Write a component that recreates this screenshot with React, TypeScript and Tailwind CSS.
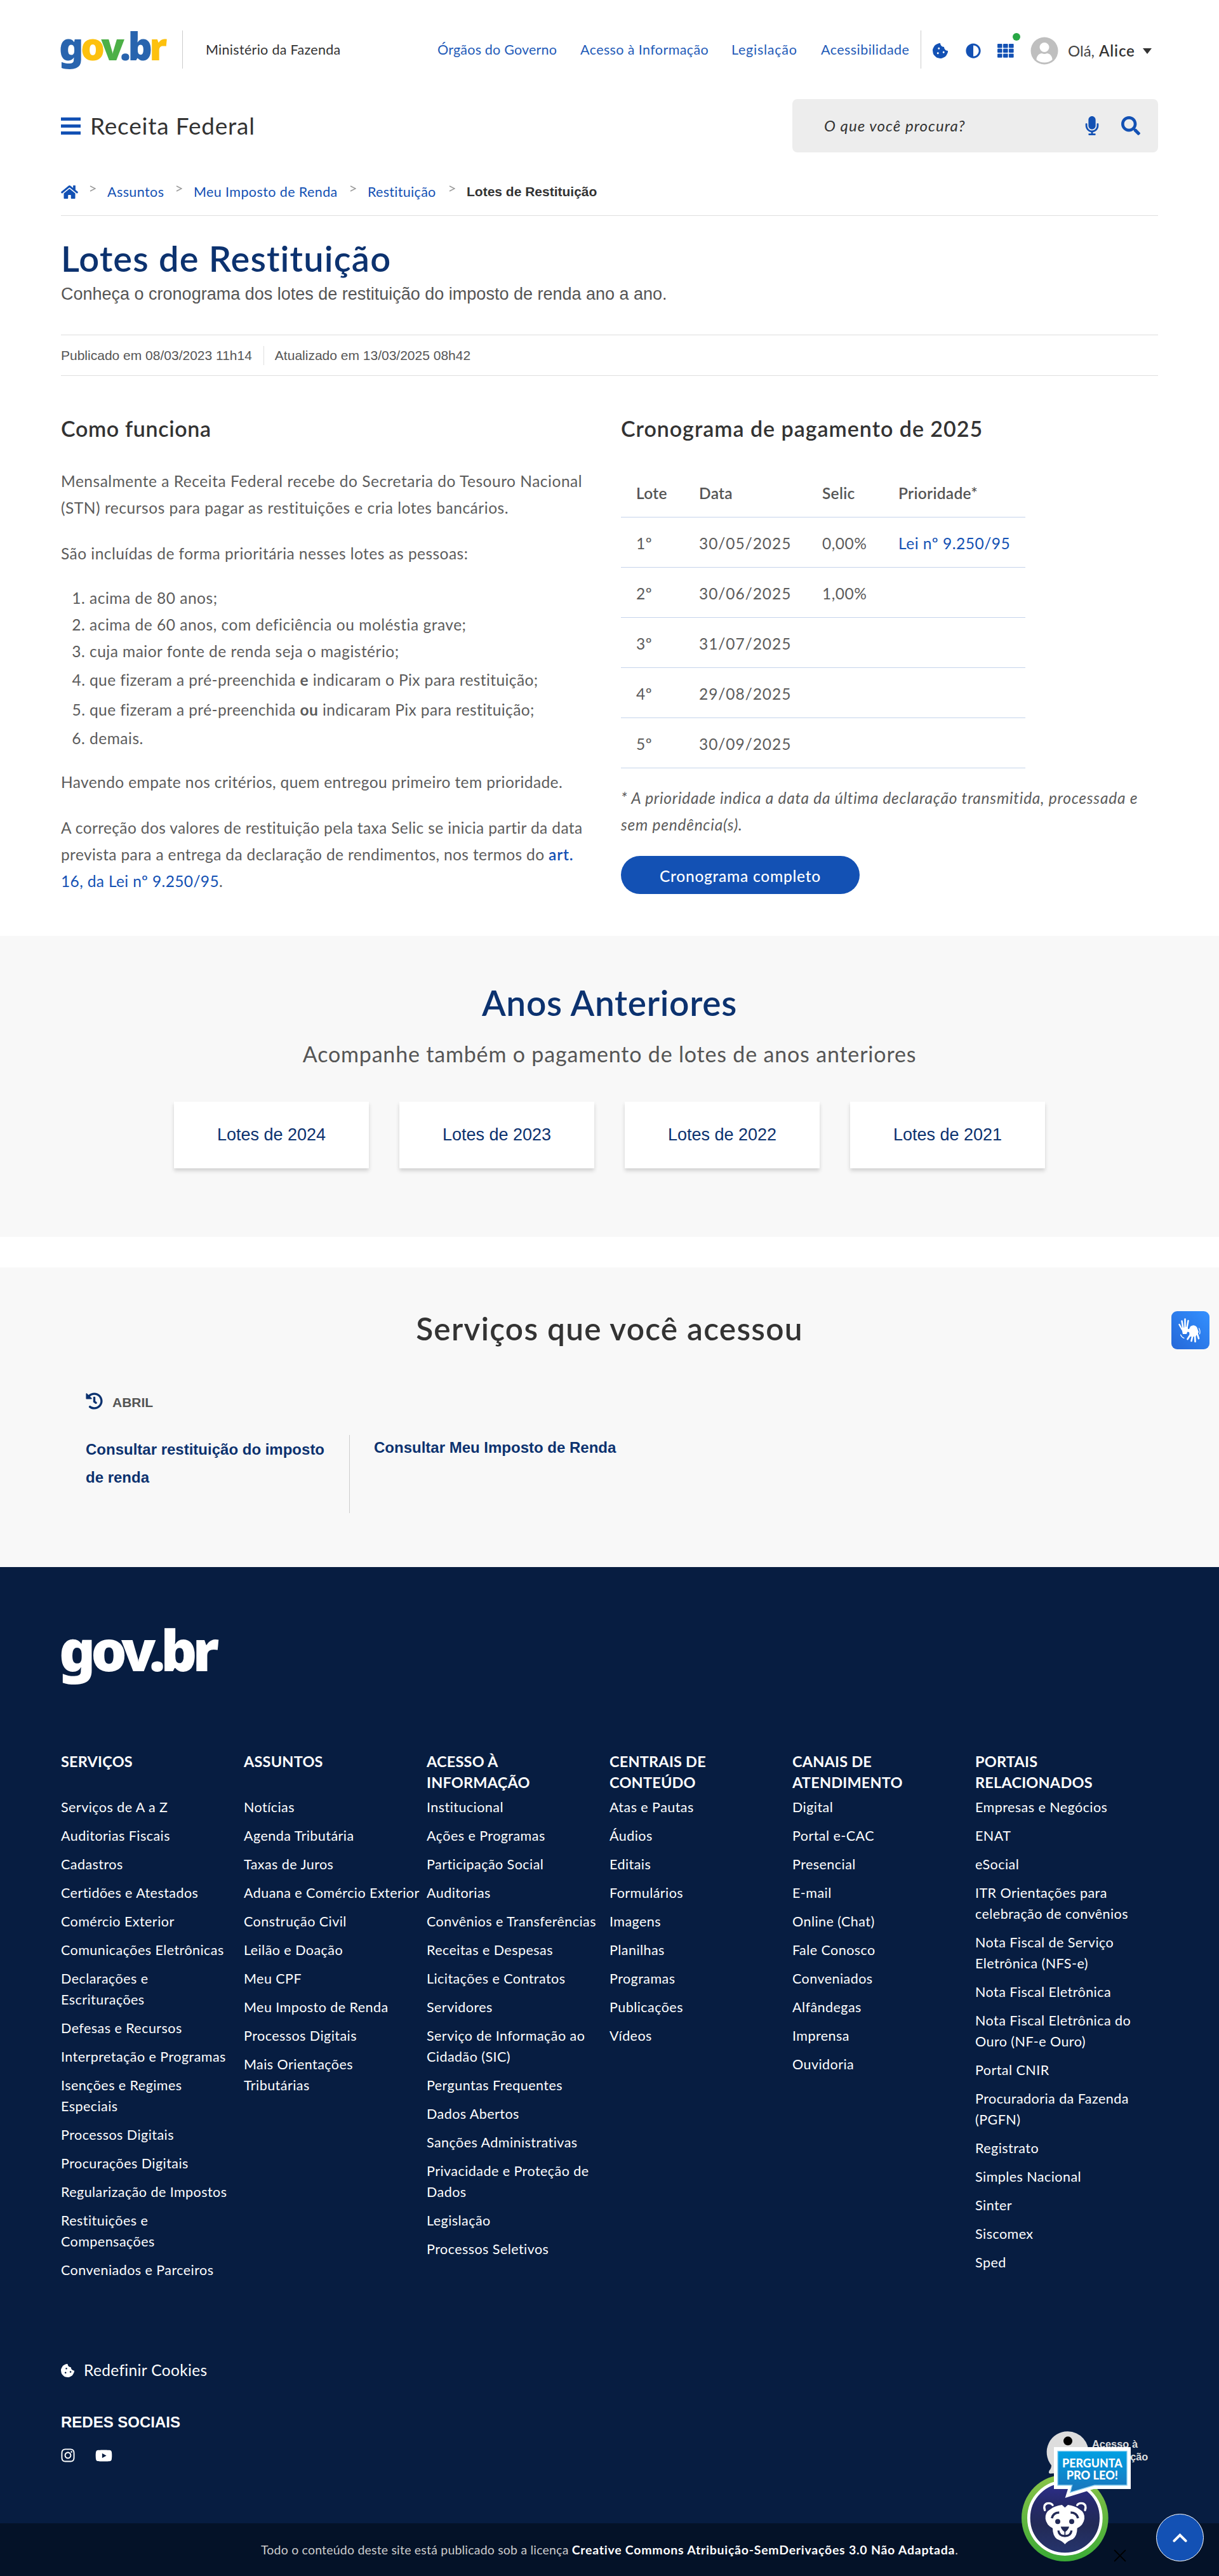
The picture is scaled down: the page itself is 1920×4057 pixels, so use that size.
import type { ReactNode } from 'react';
import {
  FaAdjust, FaCookieBite, FaHistory, FaHome,
  FaInstagram, FaMicrophone, FaSearch, FaYoutube,
} from 'react-icons/fa';

const columns: { title: string[]; items: string[] }[] = [
  {
    title: ['SERVIÇOS'],
    items: ['Serviços de A a Z', 'Auditorias Fiscais', 'Cadastros', 'Certidões e Atestados', 'Comércio Exterior', 'Comunicações Eletrônicas', 'Declarações e\nEscriturações', 'Defesas e Recursos', 'Interpretação e Programas', 'Isenções e Regimes\nEspeciais', 'Processos Digitais', 'Procurações Digitais', 'Regularização de Impostos', 'Restituições e\nCompensações', 'Conveniados e Parceiros'],
  },
  {
    title: ['ASSUNTOS'],
    items: ['Notícias', 'Agenda Tributária', 'Taxas de Juros', 'Aduana e Comércio Exterior', 'Construção Civil', 'Leilão e Doação', 'Meu CPF', 'Meu Imposto de Renda', 'Processos Digitais', 'Mais Orientações\nTributárias'],
  },
  {
    title: ['ACESSO À', 'INFORMAÇÃO'],
    items: ['Institucional', 'Ações e Programas', 'Participação Social', 'Auditorias', 'Convênios e Transferências', 'Receitas e Despesas', 'Licitações e Contratos', 'Servidores', 'Serviço de Informação ao\nCidadão (SIC)', 'Perguntas Frequentes', 'Dados Abertos', 'Sanções Administrativas', 'Privacidade e Proteção de\nDados', 'Legislação', 'Processos Seletivos'],
  },
  {
    title: ['CENTRAIS DE', 'CONTEÚDO'],
    items: ['Atas e Pautas', 'Áudios', 'Editais', 'Formulários', 'Imagens', 'Planilhas', 'Programas', 'Publicações', 'Vídeos'],
  },
  {
    title: ['CANAIS DE', 'ATENDIMENTO'],
    items: ['Digital', 'Portal e-CAC', 'Presencial', 'E-mail', 'Online (Chat)', 'Fale Conosco', 'Conveniados', 'Alfândegas', 'Imprensa', 'Ouvidoria'],
  },
  {
    title: ['PORTAIS', 'RELACIONADOS'],
    items: ['Empresas e Negócios', 'ENAT', 'eSocial', 'ITR Orientações para\ncelebração de convênios', 'Nota Fiscal de Serviço\nEletrônica (NFS-e)', 'Nota Fiscal Eletrônica', 'Nota Fiscal Eletrônica do\nOuro (NF-e Ouro)', 'Portal CNIR', 'Procuradoria da Fazenda\n(PGFN)', 'Registrato', 'Simples Nacional', 'Sinter', 'Siscomex', 'Sped'],
  },
];

const lots: [string, string, string, string][] = [
  ['1º', '30/05/2025', '0,00%', 'Lei nº 9.250/95'],
  ['2º', '30/06/2025', '1,00%', ''],
  ['3º', '31/07/2025', '', ''],
  ['4º', '29/08/2025', '', ''],
  ['5º', '30/09/2025', '', ''],
];

function GridIcon() {
  return (
    <svg width="26" height="22" viewBox="0 0 26 22" fill="#1351b4">
      {[0, 9, 18].map((x) => [0, 7.7, 15.4].map((y) => (
        <rect key={`${x}-${y}`} x={x} y={y} width="7.6" height="6.4" rx="1" />
      )))}
    </svg>
  );
}

function Avatar() {
  return (
    <svg width="44" height="44" viewBox="0 0 44 44">
      <circle cx="22" cy="22" r="21.5" fill="#bfbfbf" />
      <circle cx="22" cy="16.5" r="7.5" fill="#fff" />
      <path d="M9.5 36 C9.5 30 14 26 18 26 Q22 28 26 26 C30 26 34.500 30 34.500 36 Q29 40.500 22 40.500 Q15 40.500 9.500 36Z" fill="#fff" />
    </svg>
  );
}

/* Two signing hands: one with the fingers up, one with the fingers down */
function SigningHands() {
  return (
    <svg width="60" height="60" viewBox="0 0 60 60" fill="#fff" stroke="#fff" strokeLinecap="round">
      <path d="M16 27 L26 24 L26 30 L24 36 L18 36Z" stroke="none" />
      <path d="M17 29 L12.500 21 M18.500 27 L16.500 15.500 M21.500 26 L21.500 12.500 M24.500 26 L26.500 15" strokeWidth="2.5" fill="none" />
      <path d="M30 24 Q36 20 40 25 L43 33 L38 40 L29 40 L28 33 L22 32 Q20 30 23 28.500 L28 28Z" stroke="none" />
      <path d="M30 37 L25.500 44 M33.500 38 L31.500 47 M37 38 L37.500 48 M40.500 35 L43 43" strokeWidth="2.7" fill="none" />
      <path d="M43.500 27 Q46 31 44.500 36 M14.500 37 Q16 41 20 42.500" strokeWidth="1.2" fill="none" />
    </svg>
  );
}

function Crumb({ children, className }: { children: ReactNode; className: string }) {
  return (
    <>
      <svg className="-mt-2.5 ml-[18px]" width="10" height="10" viewBox="0 0 10 10" fill="none" stroke="#999" strokeWidth="1.4">
        <path d="M1 1 L9 5 L1 9" />
      </svg>
      <span className={className}>{children}</span>
    </>
  );
}

/* Chat mascot, speech bubble and the access-to-information seal behind it */
function Mascot() {
  return (
    <svg className="absolute bottom-0 right-0" width="420" height="277" viewBox="0 0 1260 831">
      <defs>
        <linearGradient id="ring" x1="0" y1="0" x2="0" y2="1">
          <stop offset="0" stopColor="#8bc34a" />
          <stop offset="1" stopColor="#3aaa35" />
        </linearGradient>
        <linearGradient id="disc" x1="0" y1="0" x2="0" y2="1">
          <stop offset="0" stopColor="#2e2f8f" />
          <stop offset="0.3" stopColor="#25296a" />
          <stop offset="0.6" stopColor="#222a56" />
          <stop offset="1" stopColor="#26356e" />
        </linearGradient>
        <linearGradient id="bubble" x1="0" y1="0" x2="0" y2="1">
          <stop offset="0" stopColor="#00a0e3" />
          <stop offset="1" stopColor="#1b75bc" />
        </linearGradient>
      </defs>
      <path d="M546 148 a98 98 0 1 1 -20 194 Q490 345 462 347 Q452 346 458 333 Q468 322 468 308 A98 98 0 0 1 546 148Z" fill="#ddd" />
      <circle cx="546" cy="193" r="21" fill="#000" />
      <text x="660" y="226" fontFamily="Liberation Sans" fontWeight="700" fontSize="49" textLength="216" fill="#ddd">Acesso à</text>
      <text x="841" y="286" fontFamily="Liberation Sans" fontWeight="700" fontSize="49" textLength="84" fill="#ddd">ção</text>
      <circle cx="532" cy="557" r="205" fill="url(#ring)" />
      <circle cx="532" cy="557" r="171" fill="url(#disc)" stroke="#fff" strokeWidth="14" />
      <path d="M480 222 H843 V420 H668 L533 462 L546 420 H480Z" fill="#fff" />
      <path d="M498 241 H825 V402 H672 L557 436 L566 402 H498Z" fill="url(#bubble)" stroke="#8fd0f0" strokeWidth="4" />
      <g fill="#fff" fontFamily="Lato" fontWeight="900" fontSize="58">
        <text x="519" y="318" textLength="284" lengthAdjust="spacingAndGlyphs">PERGUNTA</text>
        <text x="539" y="374" textLength="244" lengthAdjust="spacingAndGlyphs">PRO LEO!</text>
      </g>
      <g fill="none" stroke="#fff" strokeWidth="10" strokeLinecap="round">
        <path d="M437 520 Q428 495 448 488 Q466 484 474 496" />
        <path d="M627 520 Q636 495 616 488 Q598 484 590 496" />
      </g>
      <path d="M532 508 L546 495 Q580 500 600 515 Q627 530 624 560 Q620 590 590 605 Q590 640 570 656 Q545 665 532 681 Q519 665 494 656 Q474 640 474 605 Q444 590 440 560 Q437 530 464 515 Q484 500 518 495Z" fill="#fff" />
      <g fill="none" stroke="#222a56" strokeWidth="11">
        <path d="M470 558 Q476 532 505 531" />
        <path d="M594 558 Q588 532 559 531" />
        <path d="M501 616 Q504 642 532 642 Q560 642 563 616" strokeWidth="10" />
        <path d="M532 616 V642" strokeWidth="5" />
      </g>
      <circle cx="498" cy="574" r="12" fill="#222a56" />
      <circle cx="564" cy="574" r="12" fill="#222a56" />
      <path d="M512 598 H552 Q548 614 532 624 Q516 614 512 598Z" fill="#222a56" />
      <path d="M767 710 L817 760 M817 710 L767 760" stroke="#000" strokeWidth="6" strokeLinecap="round" />
      <circle cx="1075.500" cy="649.500" r="111" fill="#1351b4" stroke="#fff" strokeWidth="3" />
      <path d="M1048 665 L1075.500 638 L1103 665" fill="none" stroke="#fff" strokeWidth="12" strokeLinecap="round" strokeLinejoin="miter" />
    </svg>
  );
}

export default function App() {
  return (
    <div className="relative h-[4057px] w-[1920px] overflow-hidden bg-white font-[Lato,sans-serif] text-[#333]">
      <header className="px-24 pt-12">
        <div className="flex h-[60px] items-center">
          <div className="-ml-[3px] -mt-3 w-[194px] whitespace-nowrap font-['Noto_Sans',sans-serif] text-[60px] font-black leading-[60px] tracking-[-4.7px] text-[#2864ae]">
            g<span className="text-[#fdc10e]">o</span><span className="text-[#4cb047]">v</span>.b<span className="text-[#fdc10e]">r</span>
          </div>
          <div className="h-full w-px bg-[#ccc]" />
          <div className="ml-9 w-[365px] pt-px text-[21.5px] tracking-[0.3px]">Ministério da Fazenda</div>
          <nav className="flex gap-9 whitespace-nowrap pt-px text-[21.5px] text-[#1f5bb8]">
            <span className="w-[189px] tracking-[0.2px]">Órgãos do Governo</span>
            <span className="w-[202px] tracking-[0.4px]">Acesso à Informação</span>
            <span className="w-[105px] tracking-[0.75px]">Legislação</span>
            <span className="w-[139px] tracking-[0.45px]">Acessibilidade</span>
          </nav>
          <div className="ml-[18px] h-full w-px bg-[#ccc]" />
          <div className="flex items-center pt-1 text-2xl text-[#1351b4]">
            <FaCookieBite className="ml-[18px]" />
            <FaAdjust className="ml-[28px]" />
            <div className="relative ml-[26px]">
              <GridIcon />
              <span className="absolute -top-[17px] left-6 size-3 rounded-full bg-[#28a745]" />
            </div>
            <div className="ml-[26px]"><Avatar /></div>
            <div className="ml-[15px] w-[49px] text-2xl text-[#444]">Olá,</div>
            <div className="w-[69px] text-2xl font-semibold tracking-[0.9px] text-[#333]">Alice</div>
            <svg width="14" height="9" viewBox="0 0 14 9" fill="#333"><path d="M0 0 H14 L7 9Z" /></svg>
          </div>
        </div>

        <div className="mt-12 flex h-[84px] items-center">
          <div className="flex h-[27px] w-[31px] flex-col justify-between">
            <span className="h-[5px] bg-[#1351b4]" />
            <span className="h-[5px] bg-[#1351b4]" />
            <span className="h-[5px] bg-[#1351b4]" />
          </div>
          <div className="-mt-px ml-[15px] text-[37px] tracking-[0.8px]">Receita Federal</div>
          <div className="ml-auto flex h-full w-[576px] items-center rounded-lg bg-[#ededed] pl-[50px] text-[#1351b4]">
            <div className="w-[407px] text-2xl italic tracking-[1.05px] text-[#333]">O que você procura?</div>
            <FaMicrophone className="text-[30px]" />
            <FaSearch className="ml-[31px] text-[30px]" />
          </div>
        </div>

        <div className="mt-[42px] flex h-[58px] items-center border-b border-[#dedede] pb-[17px] text-[21.5px] text-[#1351b4]">
          <FaHome className="w-[27px] text-[27px]" />
          <Crumb className="ml-[18px] w-[90px] tracking-[0.4px]">Assuntos</Crumb>
          <Crumb className="ml-[18px] w-[228px] tracking-[0.4px]">Meu Imposto de Renda</Crumb>
          <Crumb className="ml-[18px] w-[110px] tracking-[0.3px]">Restituição</Crumb>
          <Crumb className="ml-[18px] font-['Liberation_Sans',sans-serif] text-[21px] font-bold text-[#333]">Lotes de Restituição</Crumb>
        </div>

        <h1 className="mt-[34px] text-[56px] font-semibold leading-[66px] tracking-[1.15px] text-[#0c326f]">Lotes de Restituição</h1>
        <p className="mt-[5px] font-['Liberation_Sans',sans-serif] text-[27px] leading-9 text-[#555]">
          Conheça o cronograma dos lotes de restituição do imposto de renda ano a ano.
        </p>
        <div className="mt-[46px] flex h-[65px] items-center border-y border-[#dedede] font-['Liberation_Sans',sans-serif] text-[21px] text-[#555]">
          <span>Publicado em 08/03/2023 11h14</span>
          <span className="ml-[18px] mr-[17px] h-[30px] w-px bg-[#dedede]" />
          <span>Atualizado em 13/03/2025 08h42</span>
        </div>
      </header>

      <main className="flex h-[882px] whitespace-nowrap px-24 pt-[61px] text-[24.5px] leading-[42px] tracking-[0.52px] text-[#5c5c5c]">
        <section className="w-[882px]">
          <h2 className="text-[34px] font-semibold leading-[44px] tracking-[0.65px] text-[#333]">Como funciona</h2>
          <p className="mt-10">Mensalmente a Receita Federal recebe do Secretaria do Tesouro Nacional<br />(STN) recursos para pagar as restituições e cria lotes bancários.</p>
          <p className="mt-[30px] tracking-[0.46px]">São incluídas de forma prioritária nesses lotes as pessoas:</p>
          <ol className="mt-7 list-decimal pl-[45px]">
            <li>acima de 80 anos;</li>
            <li>acima de 60 anos, com deficiência ou moléstia grave;</li>
            <li className="tracking-[0.48px]">cuja maior fonte de renda seja o magistério;</li>
            <li className="leading-[47px] tracking-[0.4px]">que fizeram a pré-preenchida <b>e</b> indicaram o Pix para restituição;</li>
            <li className="leading-[48px] tracking-[0.4px]">que fizeram a pré-preenchida <b>ou</b> indicaram Pix para restituição;</li>
            <li>demais.</li>
          </ol>
          <p className="mt-[27px] tracking-[0.4px]">Havendo empate nos critérios, quem entregou primeiro tem prioridade.</p>
          <p className="mt-[30px] tracking-[0.37px]">
            A correção dos valores de restituição pela taxa Selic se inicia partir da data<br />
            prevista para a entrega da declaração de rendimentos, nos termos do <span className="font-semibold tracking-[0.8px] text-[#1351b4]">art.</span><br /><span className="text-[#1351b4]">16, da Lei nº 9.250/95</span>.
          </p>
        </section>

        <section>
          <h2 className="text-[34px] font-semibold leading-[44px] tracking-[0.97px] text-[#333]">Cronograma de pagamento de 2025</h2>
          <div className="-mt-px pt-10">
            <div className="w-[637px]">
              <div className="grid h-[79px] grid-cols-[99px_194px_120px_1fr] items-center border-b border-[#c5d4eb] pl-6 pt-1 font-semibold tracking-[0.3px] text-[#555]">
                <span>Lote</span><span>Data</span><span>Selic</span><span>Prioridade*</span>
              </div>
              {lots.map(([lot, date, selic, law]) => (
                <div key={lot} className="grid h-[79px] grid-cols-[99px_194px_120px_1fr] items-center border-b border-[#c5d4eb] pl-6 pt-1">
                  <span>{lot}</span><span className="tracking-[0.95px]">{date}</span><span>{selic}</span>
                  <span className="text-[#1351b4]">{law}</span>
                </div>
              ))}
            </div>
          </div>
          <p className="mt-[26px] italic tracking-[0.75px]">* A prioridade indica a data da última declaração transmitida, processada e<br />sem pendência(s).</p>
          <button className="mt-7 block h-[60px] w-[376px] rounded-full bg-[#1351b4] pt-1 text-center text-[24.5px] font-medium tracking-[0.75px] text-white">Cronograma completo</button>
        </section>
      </main>

      <section className="h-[474px] bg-[#f8f8f8] pt-[72px] text-center">
        <h2 className="text-[55px] font-semibold leading-[66px] tracking-[0.75px] text-[#0c326f]">Anos Anteriores</h2>
        <p className="mt-[26px] text-[34px] leading-[44px] tracking-[0.82px] text-[#555]">Acompanhe também o pagamento de lotes de anos anteriores</p>
        <div className="mt-[53px] flex justify-center gap-12 font-['Liberation_Sans',sans-serif] text-[27px] text-[#0c326f]">
          {['2024', '2023', '2022', '2021'].map((year) => (
            <div key={year} className="flex h-[105px] w-[307px] items-center justify-center bg-white shadow-[0_4px_6px_rgba(0,0,0,0.16)]">Lotes de {year}</div>
          ))}
        </div>
      </section>

      <section className="mt-12 h-[472px] bg-[#f8f8f8] pt-[66px]">
        <h2 className="text-center text-[49.5px] font-semibold leading-[60px] tracking-[1.3px]">Serviços que você acessou</h2>
        <div className="mt-[68px] flex h-9 items-center pl-[135px] font-['Liberation_Sans',sans-serif] text-[21px] font-bold text-[#555]">
          <FaHistory className="mr-[15px] -mt-1 size-[27px] text-[#0c326f]" />
          <span className="pt-[2px]">ABRIL</span>
        </div>
        <div className="ml-[135px] mt-[34px] flex h-[123px] font-['Liberation_Sans',sans-serif] text-2xl font-bold leading-[44px] text-[#0c326f]">
          <div className="w-[416px] border-r border-[#ccc] pt-px">Consultar restituição do imposto<br />de renda</div>
          <div className="-mt-0.5 pl-[38px]">Consultar Meu Imposto de Renda</div>
        </div>
      </section>

      <footer className="h-[1589px] bg-[#071d41] pt-20 text-white">
        <div className="px-24">
          <div className="-ml-[3px] whitespace-nowrap font-['Noto_Sans',sans-serif] text-[89px] font-black leading-[100px] tracking-[-7.1px]">gov.br</div>
          <div className="mt-[110px] grid grid-cols-6 whitespace-pre text-[21.5px] leading-[33px] tracking-[0.45px]">
            {columns.map((col) => (
              <div key={col.title[0]}>
                <h3 className="mb-1.5 h-[66px] text-[23.5px] font-bold tracking-[0.2px]">{col.title.join('\n')}</h3>
                <ul className="flex flex-col gap-3">
                  {col.items.map((item) => <li key={item}>{item}</li>)}
                </ul>
              </div>
            ))}
          </div>
          <div className="mt-[123px] flex h-9 items-center text-[24.5px] tracking-[0.35px]">
            <FaCookieBite className="mr-[15px] size-[21px]" />Redefinir Cookies
          </div>
          <div className="mt-[46px] font-['Liberation_Sans',sans-serif] text-2xl font-bold leading-9">REDES SOCIAIS</div>
          <div className="mt-[23px] flex h-[22px] items-center">
            <FaInstagram className="-ml-[1px] size-6" />
            <FaYoutube className="ml-[31px] size-[27px]" />
          </div>
        </div>
        <div className="mt-24 flex h-[83px] items-center justify-center bg-[#041228] text-[19.5px] tracking-[0.2px] text-[#ccc]">
          <p className="whitespace-nowrap">Todo o conteúdo deste site está publicado sob a licença <b className="tracking-[0.75px] text-white">Creative Commons Atribuição-SemDerivações 3.0 Não Adaptada</b>.</p>
        </div>
      </footer>

      <div className="absolute right-[15px] top-[2065px] size-[60px] rounded-[9px] bg-gradient-to-tr from-[#2568d8] to-[#3490ff]">
        <SigningHands />
      </div>
      <Mascot />
    </div>
  );
}
